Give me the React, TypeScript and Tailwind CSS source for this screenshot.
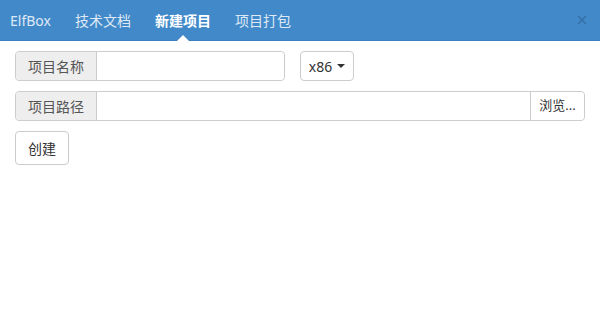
import { X } from "lucide-react";

const tabs = ["ElfBox", "技术文档", "新建项目", "项目打包"];

export default function App() {
  return (
    <div className="h-[324px] w-[600px] bg-white text-[14px] text-[#333] [font-family:'Noto_Sans','Noto_Sans_CJK_SC',sans-serif]">
      <div className="flex h-[41px] items-center border-b border-[#3a7fbd] bg-[#4289ca] pl-[10px] pr-[11px]">
        {tabs.map((t, i) => {
          const active = i === 2;
          return (
            <div key={t} className="relative mr-[24px] flex h-full items-center">
              <span className={"text-[14px] " + (active ? "font-semibold text-white" : "text-[#dfe9f4]")}>{t}</span>
              {active && (
                <span className="absolute bottom-[-1px] left-1/2 h-0 w-0 -translate-x-1/2 border-x-[6px] border-b-[6px] border-x-transparent border-b-white" />
              )}
            </div>
          );
        })}
        <X className="ml-auto h-[14px] w-[14px] text-[#336ea3]" strokeWidth={2.2} />
      </div>

      <div className="flex flex-col gap-[10px] px-[15px] pt-[10px]">
        <div className="flex items-center gap-[15px]">
          <div className="flex h-[30px] w-[270px] rounded-[4px] border border-[#ccc]">
            <span className="flex w-[81px] items-center justify-center rounded-l-[4px] border-r border-[#ccc] bg-[#eee] text-[#555]">项目名称</span>
            <input className="min-w-0 flex-1 rounded-r-[4px] bg-white outline-none" />
          </div>
          <button className="flex h-[30px] w-[54px] items-center justify-center gap-[5px] rounded-[4px] border border-[#ccc] bg-white">
            x86
            <span className="h-0 w-0 border-x-[4px] border-t-[4px] border-x-transparent border-t-[#333]" />
          </button>
        </div>

        <div className="flex h-[30px] w-[570px] rounded-[4px] border border-[#ccc]">
          <span className="flex w-[81px] items-center justify-center rounded-l-[4px] border-r border-[#ccc] bg-[#eee] text-[#555]">项目路径</span>
          <input className="min-w-0 flex-1 bg-white outline-none" />
          <button className="flex w-[54px] items-center justify-center rounded-r-[4px] border-l border-[#ccc] bg-white text-[13px]">浏览...</button>
        </div>

        <div>
          <button className="h-[34px] w-[54px] rounded-[4px] border border-[#ccc] bg-white text-[14px]">创建</button>
        </div>
      </div>
    </div>
  );
}
